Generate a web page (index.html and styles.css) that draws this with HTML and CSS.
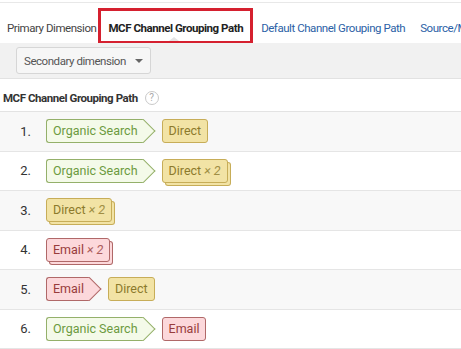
FILE: index.html
```html
<!DOCTYPE html>
<html lang="en">
<head>
    <meta charset="UTF-8">
    <meta name="viewport" content="width=device-width, initial-scale=1.0">
    <title>MCF Channel Grouping Path</title>
    <link rel="stylesheet" href="styles.css">
</head>
<body>

    <div class="topline"></div>

    <nav class="tabs">
        <span class="tab tab-first">Primary Dimension</span>
        <span class="tab tab-active">MCF Channel Grouping Path</span>
        <a class="tab tab-link" href="#">Default Channel Grouping Path</a>
        <a class="tab tab-link tab-last" href="#">Source/Medium Path</a>
    </nav>

    <div class="toolbar">
        <button class="dim-btn">Secondary dimension <span class="caret"></span></button>
    </div>

    <div class="path-head">
        MCF Channel Grouping Path <span class="help">?</span>
    </div>

    <div class="paths">
        <div class="row">
            <span class="num">1.</span>
            <div class="path">
                <span class="pill green next">Organic Search</span>
                <span class="pill yellow">Direct</span>
            </div>
        </div>
        <div class="row">
            <span class="num">2.</span>
            <div class="path">
                <span class="pill green next">Organic Search</span>
                <span class="pill yellow stack">Direct <i class="count">× 2</i></span>
            </div>
        </div>
        <div class="row">
            <span class="num">3.</span>
            <div class="path">
                <span class="pill yellow stack">Direct <i class="count">× 2</i></span>
            </div>
        </div>
        <div class="row">
            <span class="num">4.</span>
            <div class="path">
                <span class="pill red stack">Email <i class="count">× 2</i></span>
            </div>
        </div>
        <div class="row">
            <span class="num">5.</span>
            <div class="path">
                <span class="pill red next">Email</span>
                <span class="pill yellow">Direct</span>
            </div>
        </div>
        <div class="row">
            <span class="num">6.</span>
            <div class="path">
                <span class="pill green next">Organic Search</span>
                <span class="pill red">Email</span>
            </div>
        </div>
    </div>

</body>
</html>
```

FILE: styles.css
```css
body {
    font-family: Roboto, "Liberation Sans", Arial, sans-serif;
    background-color: #fff;
    margin: 0;
    overflow: hidden;
}

.topline {
    margin-top: 2px;
    border-top: 1px solid #e8e8e8;
}

/* tabs */
.tabs {
    display: flex;
    align-items: flex-end;
    height: 40px;
    white-space: nowrap;
    overflow: hidden;
    font-size: 11.5px;
    letter-spacing: -0.45px;
    line-height: 16px;
}

.tab {
    flex-shrink: 0;
    padding: 0 8px 7px;
    color: #444;
    text-decoration: none;
}

.tab-first {
    padding-left: 7px;
    padding-right: 2px;
}

.tab-active {
    position: relative;
    z-index: 1;
    padding: 9px 7px 5px;
    margin-bottom: -1px;
    border: 3px solid #d5202f;
    color: #222;
    font-weight: bold;
}

/* little notch under the selected tab */
.tab-active::after {
    content: "";
    position: absolute;
    left: 68px;
    bottom: 0;
    border-left: 5px solid transparent;
    border-right: 5px solid transparent;
    border-bottom: 4px solid #e4e4e4;
}

.tab-link {
    color: #2b5fa6;
}

.tab-last {
    padding-left: 7px;
}

/* toolbar */
.toolbar {
    background-color: #f1f1f1;
    border-bottom: 1px solid #e2e2e2;
    padding: 4px 16px;
}

.dim-btn {
    display: flex;
    align-items: center;
    height: 27px;
    padding: 0 7px;
    font-family: inherit;
    font-size: 11.5px;
    letter-spacing: -0.45px;
    color: #555;
    background-color: #f6f6f6;
    border: 1px solid #d6d6d6;
    border-radius: 3px;
}

.caret {
    margin-left: 9px;
    border-left: 4px solid transparent;
    border-right: 4px solid transparent;
    border-top: 4px solid #666;
}

/* header */
.path-head {
    display: flex;
    align-items: center;
    box-sizing: border-box;
    height: 33px;
    padding: 5px 0 0 3px;
    border-bottom: 1px solid #e3e3e3;
    font-size: 11.5px;
    letter-spacing: -0.45px;
    font-weight: bold;
    color: #333;
}

.help {
    display: inline-flex;
    align-items: center;
    justify-content: center;
    width: 12px;
    height: 12px;
    margin-left: 7px;
    border: 1px solid #c9c9c9;
    border-radius: 50%;
    font-size: 10px;
    letter-spacing: 0;
    font-weight: normal;
    color: #aaa;
}

/* rows */
.row {
    display: flex;
    align-items: center;
    box-sizing: border-box;
    height: 39.5px;
    border-bottom: 1px solid #e5e5e5;
}

.row:nth-child(odd) {
    background-color: #f8f8f8;
}

.num {
    width: 31px;
    text-align: right;
    font-size: 13px;
    color: #333;
}

.path {
    display: flex;
    align-items: center;
    margin-left: 15px;
}

/* channel pills */
.pill {
    position: relative;
    z-index: 0;
    box-sizing: border-box;
    height: 24px;
    line-height: 22px;
    padding: 0 6px;
    font-size: 12.5px;
    background-color: var(--bg);
    border: 1px solid var(--bd);
    border-radius: 3px;
    white-space: nowrap;
}

.green {
    --bg: #f4fae9;
    --bd: #94b06a;
    color: #6c9a40;
}

.yellow {
    --bg: #f2e3a5;
    --bd: #c7ad58;
    color: #8c7a2c;
}

.red {
    --bg: #fcd8db;
    --bd: #b06868;
    color: #983c3c;
}

.pill.next {
    border-right: 0;
    border-radius: 3px 0 0 3px;
    margin-right: 18px;
}

.pill.next::after {
    content: "";
    position: absolute;
    z-index: -1;
    top: 50%;
    right: -8.5px;
    box-sizing: border-box;
    width: 17px;
    height: 17px;
    background-color: var(--bg);
    border-top: 1px solid var(--bd);
    border-right: 1px solid var(--bd);
    transform: translateY(-50%) rotate(45deg);
}

.pill.stack {
    margin-right: 3px;
    box-shadow: 3px 3px 0 -1px var(--bg), 3px 3px 0 0 var(--bd);
}

.count {
    opacity: 0.8;
}
```
